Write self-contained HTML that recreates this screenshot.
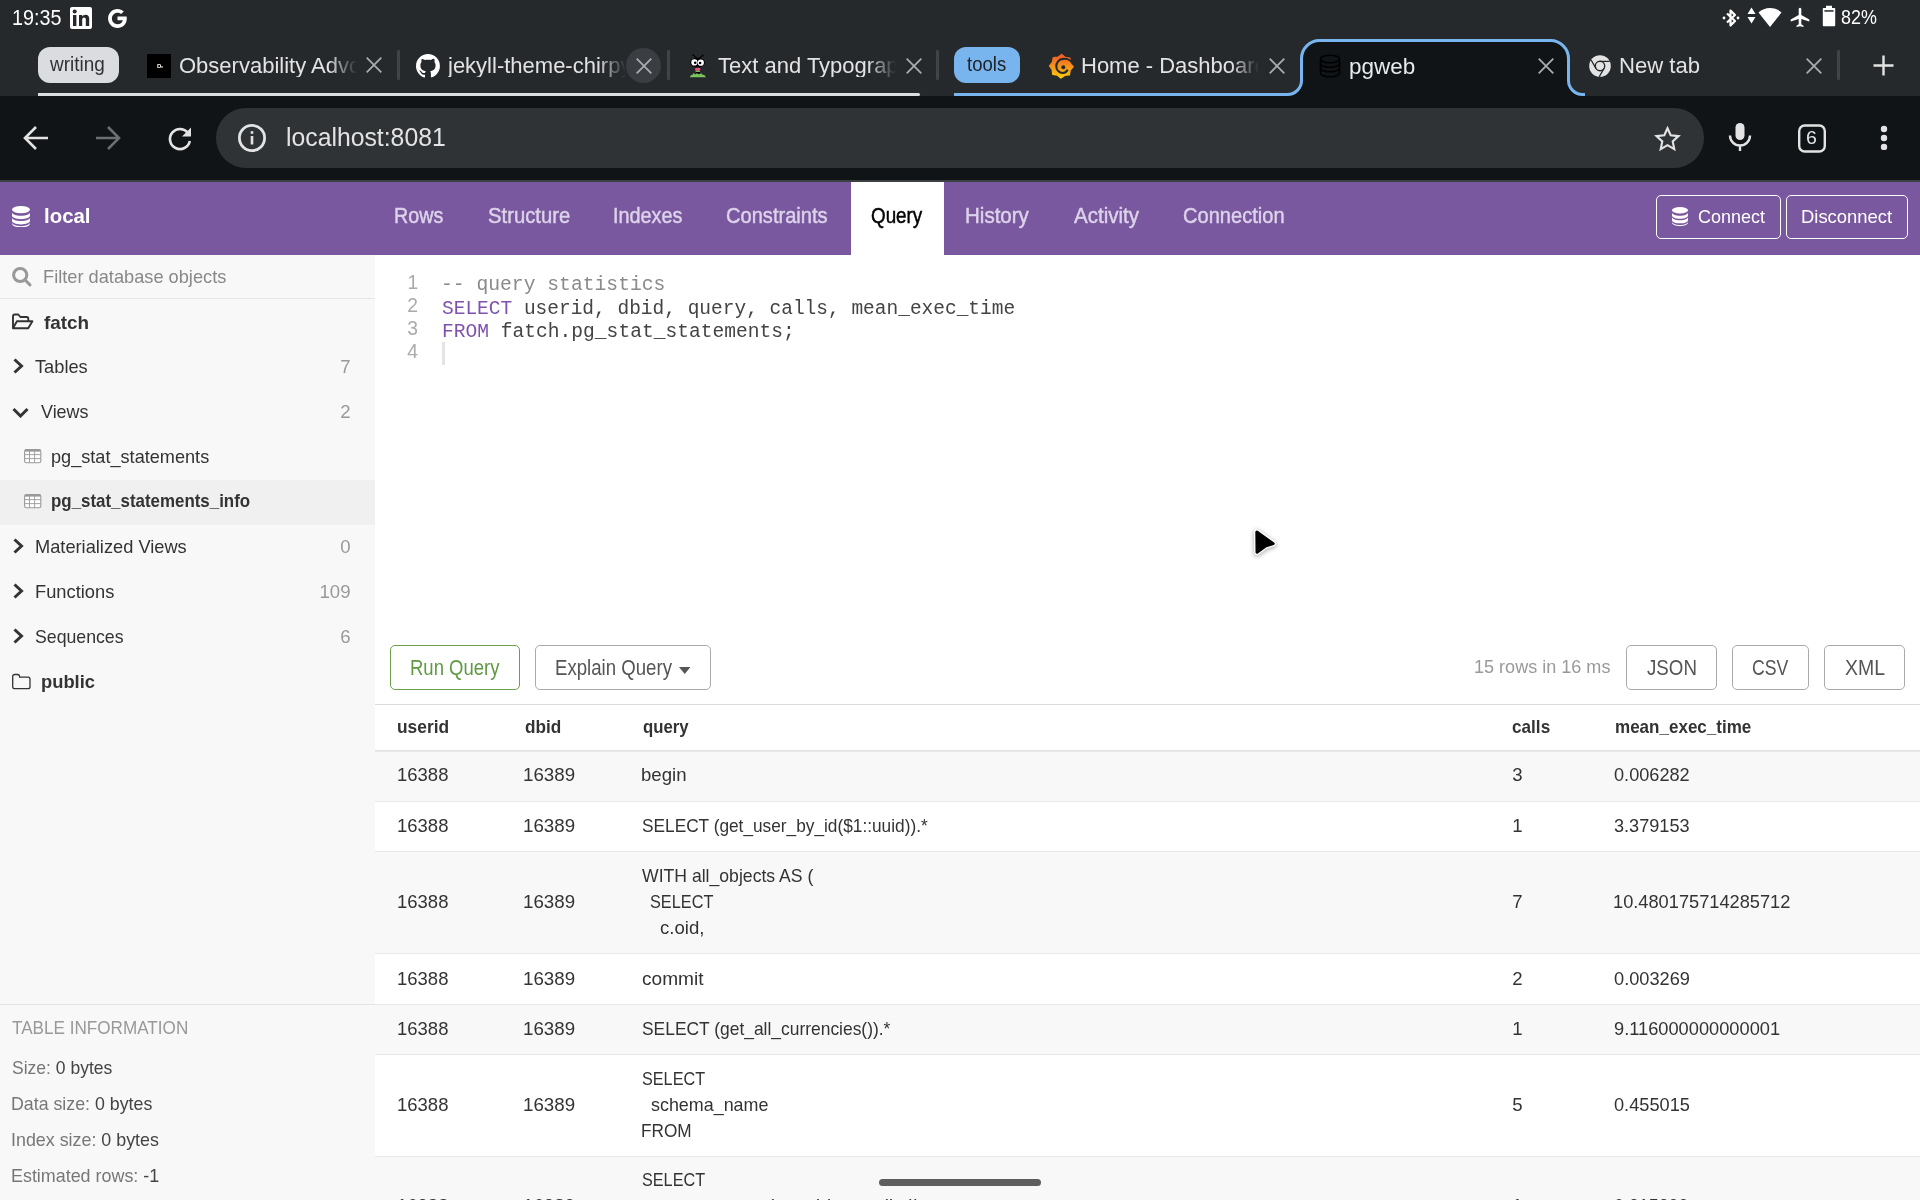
<!DOCTYPE html>
<html><head><meta charset="utf-8"><title>pgweb</title>
<style>
html,body{margin:0;padding:0;width:1920px;height:1200px;overflow:hidden;background:#fff;}
body{position:relative;font-family:"Liberation Sans",sans-serif;}
#root{position:absolute;left:0;top:0;width:1920px;height:1200px;overflow:hidden;will-change:transform;}
</style></head><body><div id="root">
<div style="position:absolute;left:0px;top:0px;width:1920px;height:96px;background:#25292c"></div>
<div style="position:absolute;left:0px;top:96px;width:1920px;height:84px;background:#101417"></div>
<div style="position:absolute;left:0px;top:180px;width:1920px;height:2px;background:#3c4043"></div>
<div style="position:absolute;left:11.82px;top:8.00px;font:normal 21.5px/21.5px 'Liberation Sans', sans-serif;color:#ffffff;white-space:pre;transform:scaleX(0.9185);transform-origin:0 0;">19:35</div>
<svg style="position:absolute;left:70px;top:7px;" width="22" height="22" viewBox="0 0 22 22"><rect x="0" y="0" width="22" height="22" rx="2" fill="#fff"/><rect x="3" y="8" width="3.4" height="11" fill="#25292c"/><circle cx="4.7" cy="4.6" r="2" fill="#25292c"/><path d="M9 8h3.2v1.6c.6-1.1 1.8-1.9 3.4-1.9 2.6 0 3.6 1.6 3.6 4.3V19h-3.4v-6.2c0-1.4-.5-2.2-1.7-2.2-1.3 0-1.9.9-1.9 2.3V19H9z" fill="#25292c"/></svg>
<svg style="position:absolute;left:107px;top:8px;" width="21" height="21" viewBox="0 0 21 21"><path d="M19.6 8.6H10.5v3.6h5.3c-.6 2.4-2.6 4-5.3 4-3.1 0-5.6-2.5-5.6-5.7s2.5-5.7 5.6-5.7c1.4 0 2.6.5 3.6 1.3l2.7-2.7C15.1 1.9 12.9 1 10.5 1 5.3 1 1.1 5.2 1.1 10.5S5.3 20 10.5 20c5 0 9.3-3.6 9.3-9.5 0-.6-.1-1.3-.2-1.9z" fill="#fff"/></svg>
<svg style="position:absolute;left:1722px;top:7px;" width="18" height="22" viewBox="0 0 18 22"><path d="M5 6.5l8 7.5-4.5 4.5V3.5L13 8l-8 7.5" fill="none" stroke="#fff" stroke-width="2.2" stroke-linejoin="round"/><circle cx="2" cy="11" r="1.4" fill="#fff"/><circle cx="16" cy="11" r="1.4" fill="#fff"/></svg>
<svg style="position:absolute;left:1747px;top:7px;" width="9" height="17" viewBox="0 0 9 17"><path d="M4.5 0.5L8.5 7H0.5z M4.5 16.5L8.5 10H0.5z" fill="#fff"/></svg>
<svg style="position:absolute;left:1758px;top:7px;" width="24" height="21" viewBox="0 0 24 21"><path d="M12 20L0.5 5.5C3.7 2.6 7.6 1 12 1s8.3 1.6 11.5 4.5z" fill="#fff"/></svg>
<svg style="position:absolute;left:1790px;top:7px;" width="20" height="21" viewBox="0 0 20 21"><path d="M10 0.8c.9 0 1.3.8 1.3 1.8v5.3l8 4.6v1.9l-8-2.4v5.2l2.2 1.6V20L10 19.2 6.5 20v-1.2l2.2-1.6v-5.2l-8 2.4v-1.9l8-4.6V2.6c0-1 .4-1.8 1.3-1.8z" fill="#fff"/></svg>
<svg style="position:absolute;left:1822px;top:5px;" width="14" height="22" viewBox="0 0 14 22"><path d="M4 0.8h6v2.2h2.2c.6 0 1 .4 1 1V20.3c0 .6-.4 1-1 1H1.8c-.6 0-1-.4-1-1V4c0-.6.4-1 1-1H4z" fill="#fff"/><rect x="2.4" y="5.2" width="9.2" height="1.5" fill="#25292c"/></svg>
<div style="position:absolute;left:1840.98px;top:7.00px;font:normal 20.6px/20.6px 'Liberation Sans', sans-serif;color:#ffffff;white-space:pre;transform:scaleX(0.8700);transform-origin:0 0;">82%</div>
<div style="position:absolute;left:38px;top:47px;width:81px;height:36px;background:#dadce0;border-radius:12px"></div>
<div style="position:absolute;left:50.09px;top:54.30px;font:normal 20.5px/20.5px 'Liberation Sans', sans-serif;color:#303134;white-space:pre;transform:scaleX(0.9249);transform-origin:0 0;">writing</div>
<div style="position:absolute;left:38px;top:93px;width:882px;height:3px;background:#dadce0;border-radius:0 2px 2px 0"></div>
<svg style="position:absolute;left:147px;top:54px;" width="24" height="24" viewBox="0 0 24 24"><rect width="24" height="24" fill="#000"/><text x="10" y="14.2" font-family="Liberation Sans" font-size="6" font-weight="bold" fill="#fff">D</text><text x="14" y="14.2" font-family="Liberation Sans" font-size="4" font-weight="bold" fill="#ddd">ιι</text></svg>
<div style="position:absolute;left:179px;top:55.00px;width:178px;overflow:hidden;font:22px/22px 'Liberation Sans', sans-serif;color:#e3e3e3;white-space:pre;-webkit-mask-image:linear-gradient(90deg,#000 calc(100% - 28px),transparent);">Observability Advocate</div>
<svg style="position:absolute;left:364.4px;top:55.400000000000006px;" width="20" height="20" viewBox="0 0 20 20"><path d="M2.7 2.7L17.3 17.3M17.3 2.7L2.7 17.3" stroke="#a9acb0" stroke-width="1.75" fill="none"/></svg>
<div style="position:absolute;left:397.2px;top:50.2px;width:2.6px;height:29.6px;background:#3f4448;border-radius:1.3px"></div>
<svg style="position:absolute;left:415px;top:53px;" width="26" height="26" viewBox="0 0 26 26"><path fill="#fff" d="M13 1C6.4 1 1 6.4 1 13c0 5.3 3.4 9.8 8.2 11.4.6.1.8-.3.8-.6v-2.1c-3.3.7-4-1.6-4-1.6-.5-1.4-1.3-1.8-1.3-1.8-1.1-.7.1-.7.1-.7 1.2.1 1.8 1.2 1.8 1.2 1.1 1.8 2.8 1.3 3.5 1 .1-.8.4-1.3.8-1.6-2.7-.3-5.5-1.3-5.5-5.9 0-1.3.5-2.4 1.2-3.2-.1-.3-.5-1.5.1-3.2 0 0 1-.3 3.3 1.2 1-.3 2-.4 3-.4s2 .1 3 .4c2.3-1.6 3.3-1.2 3.3-1.2.7 1.7.2 2.9.1 3.2.8.8 1.2 1.9 1.2 3.2 0 4.6-2.8 5.6-5.5 5.9.4.4.8 1.1.8 2.2v3.3c0 .3.2.7.8.6 4.8-1.6 8.2-6.1 8.2-11.4C25 6.4 19.6 1 13 1z"/></svg>
<div style="position:absolute;left:448px;top:55.00px;width:178px;overflow:hidden;font:22px/22px 'Liberation Sans', sans-serif;color:#e3e3e3;white-space:pre;-webkit-mask-image:linear-gradient(90deg,#000 calc(100% - 28px),transparent);">jekyll-theme-chirpy</div>
<div style="position:absolute;left:626px;top:48px;width:35px;height:35px;border-radius:50%;background:#3a3e42"></div>
<svg style="position:absolute;left:633.5px;top:55.5px;" width="20" height="20" viewBox="0 0 20 20"><path d="M2.7 2.7L17.3 17.3M17.3 2.7L2.7 17.3" stroke="#a9acb0" stroke-width="1.75" fill="none"/></svg>
<div style="position:absolute;left:667.2px;top:50.2px;width:2.6px;height:29.6px;background:#3f4448;border-radius:1.3px"></div>
<svg style="position:absolute;left:686px;top:52px;" width="24" height="28" viewBox="0 0 24 28"><path d="M7.3 3.2L11.2 6.6M16.7 3.4L12.9 6.6" stroke="#000" stroke-width="1.1"/><circle cx="7.3" cy="3.2" r="0.9" fill="#000"/><circle cx="16.7" cy="3.4" r="0.9" fill="#000"/><rect x="10" y="15" width="4" height="6.5" fill="#000"/><ellipse cx="11.6" cy="10.6" rx="7.3" ry="4.9" fill="#000"/><circle cx="8.4" cy="10.4" r="3.1" fill="#fff"/><circle cx="14.8" cy="10.7" r="3.1" fill="#fff"/><circle cx="9.2" cy="10.7" r="1.3" fill="#000"/><circle cx="14.1" cy="11" r="1.3" fill="#000"/><ellipse cx="11.7" cy="17.4" rx="2.8" ry="1.8" fill="#e8507f"/><rect x="9.5" y="19" width="4.5" height="1" fill="#5fbf4a"/><path d="M3.8 25.2Q4.6 22.6 6.8 22.6L7.6 21.1 9.1 22.4 11 21.2 12.6 22.5 15 21.3 16.2 22.5Q19 22.4 20 25.2Z" fill="#7cc35a"/></svg>
<div style="position:absolute;left:718px;top:55.00px;width:178px;overflow:hidden;font:22px/22px 'Liberation Sans', sans-serif;color:#e3e3e3;white-space:pre;-webkit-mask-image:linear-gradient(90deg,#000 calc(100% - 28px),transparent);">Text and Typography</div>
<svg style="position:absolute;left:903.5px;top:55.5px;" width="20" height="20" viewBox="0 0 20 20"><path d="M2.7 2.7L17.3 17.3M17.3 2.7L2.7 17.3" stroke="#a9acb0" stroke-width="1.75" fill="none"/></svg>
<div style="position:absolute;left:936.2px;top:50.2px;width:2.6px;height:29.6px;background:#3f4448;border-radius:1.3px"></div>
<div style="position:absolute;left:954px;top:47px;width:66px;height:36px;background:#78b5ef;border-radius:12px"></div>
<div style="position:absolute;left:966.52px;top:54.30px;font:normal 20.5px/20.5px 'Liberation Sans', sans-serif;color:#202124;white-space:pre;transform:scaleX(0.9046);transform-origin:0 0;">tools</div>
<svg style="position:absolute;left:1048px;top:52px;" width="26" height="28" viewBox="0 0 26 28"><defs><linearGradient id="gf" x1="0" y1="0" x2="0" y2="1"><stop offset="0" stop-color="#f05a28"/><stop offset="1" stop-color="#fbca0a"/></linearGradient></defs><polygon points="13.71,2.61 17.28,5.56 21.86,6.32 22.29,10.94 24.99,14.71 22.04,18.28 21.28,22.86 16.66,23.29 12.89,25.99 9.32,23.04 4.74,22.28 4.31,17.66 1.61,13.89 4.56,10.32 5.32,5.74 9.94,5.31" fill="url(#gf)" stroke="url(#gf)" stroke-width="1.5" stroke-linejoin="round"/><path d="M25 12.2 A9.3 9.3 0 0 0 15 6.9 A7.2 7.2 0 0 0 8.3 14.5 A6.5 6.5 0 0 0 14.8 21 A5.5 5.5 0 0 0 19.6 17.6" fill="none" stroke="#25292c" stroke-width="2.1"/><circle cx="15.3" cy="15.3" r="2" fill="#25292c"/></svg>
<div style="position:absolute;left:1081px;top:55.00px;width:178px;overflow:hidden;font:22px/22px 'Liberation Sans', sans-serif;color:#e3e3e3;white-space:pre;-webkit-mask-image:linear-gradient(90deg,#000 calc(100% - 28px),transparent);">Home - Dashboards</div>
<svg style="position:absolute;left:1266.5px;top:55.5px;" width="20" height="20" viewBox="0 0 20 20"><path d="M2.7 2.7L17.3 17.3M17.3 2.7L2.7 17.3" stroke="#a9acb0" stroke-width="1.75" fill="none"/></svg>
<div style="position:absolute;left:954px;top:93px;width:334px;height:3px;background:#78b5ef"></div>
<svg style="position:absolute;left:1270px;top:36px;" width="330" height="62" viewBox="0 0 330 62"><path d="M17.5 60 A15.5 15.5 0 0 0 31.5 44.5 V22.6 A18 18 0 0 1 49.5 4.6 H280.5 A18 18 0 0 1 298.5 22.6 V44.5 A15.5 15.5 0 0 0 312.5 60 z" fill="#101417"/><path d="M17.5 58.5 A14 14 0 0 0 31.5 44.5 V22.6 A18 18 0 0 1 49.5 4.6 H280.5 A18 18 0 0 1 298.5 22.6 V44.5 A14 14 0 0 0 312.5 58.5 H315" fill="none" stroke="#78b5ef" stroke-width="3"/></svg>
<svg style="position:absolute;left:1319px;top:54px;" width="22" height="24" viewBox="0 0 22 24"><g fill="none" stroke="#000" stroke-width="1.6"><ellipse cx="11" cy="5" rx="9.5" ry="3.8"/><path d="M1.5 5v14c0 2.1 4.3 3.8 9.5 3.8s9.5-1.7 9.5-3.8V5"/><path d="M1.5 9.5c0 2.1 4.3 3.8 9.5 3.8s9.5-1.7 9.5-3.8M1.5 14c0 2.1 4.3 3.8 9.5 3.8s9.5-1.7 9.5-3.8"/></g></svg>
<div style="position:absolute;left:1349.45px;top:55.70px;font:normal 22.5px/22.5px 'Liberation Sans', sans-serif;color:#e8eaed;white-space:pre;transform:scaleX(0.9982);transform-origin:0 0;">pgweb</div>
<svg style="position:absolute;left:1535.5px;top:55.5px;" width="20" height="20" viewBox="0 0 20 20"><path d="M2.7 2.7L17.3 17.3M17.3 2.7L2.7 17.3" stroke="#a9acb0" stroke-width="1.75" fill="none"/></svg>
<svg style="position:absolute;left:1589px;top:55px;" width="22" height="22" viewBox="0 0 22 22"><circle cx="11" cy="11" r="10.8" fill="#e3e3e3"/><circle cx="11" cy="11" r="4.7" fill="none" stroke="#25292c" stroke-width="1.4"/><path d="M11 6.3H20.7M15.07 13.35L10.2 21.75M6.93 13.35L2.1 4.95" stroke="#25292c" stroke-width="1.3"/></svg>
<div style="position:absolute;left:1618.73px;top:55.00px;font:normal 22.5px/22.5px 'Liberation Sans', sans-serif;color:#e3e3e3;white-space:pre;transform:scaleX(0.9810);transform-origin:0 0;">New tab</div>
<svg style="position:absolute;left:1804px;top:55.5px;" width="20" height="20" viewBox="0 0 20 20"><path d="M2.7 2.7L17.3 17.3M17.3 2.7L2.7 17.3" stroke="#a9acb0" stroke-width="1.75" fill="none"/></svg>
<div style="position:absolute;left:1837.2px;top:50.2px;width:2.6px;height:29.6px;background:#3f4448;border-radius:1.3px"></div>
<svg style="position:absolute;left:1873px;top:55px;" width="21" height="21" viewBox="0 0 21 21"><path d="M10.5 0.5V20.5M0.5 10.5H20.5" stroke="#e3e3e3" stroke-width="2.4"/></svg>
<svg style="position:absolute;left:22px;top:124px;" width="28" height="28" viewBox="0 0 28 28"><path d="M26 14H4M14 3L3 14l11 11" fill="none" stroke="#e3e3e3" stroke-width="2.6"/></svg>
<svg style="position:absolute;left:94px;top:124px;" width="28" height="28" viewBox="0 0 28 28"><path d="M2 14H24M14 3l11 11-11 11" fill="none" stroke="#6b6e72" stroke-width="2.6"/></svg>
<svg style="position:absolute;left:166px;top:124px;" width="28" height="28" viewBox="0 0 28 28"><path d="M22.3 9.5A10 10 0 1 0 23.8 17" fill="none" stroke="#e3e3e3" stroke-width="2.6"/><path d="M25 3.5V12.5H16z" fill="#e3e3e3"/></svg>
<div style="position:absolute;left:216px;top:108px;width:1488px;height:60px;background:#303336;border-radius:30px"></div>
<svg style="position:absolute;left:238px;top:124px;" width="28" height="28" viewBox="0 0 28 28"><circle cx="14" cy="14" r="12.6" fill="none" stroke="#e3e3e3" stroke-width="2.8"/><rect x="12.7" y="12" width="2.6" height="8.5" fill="#e3e3e3"/><rect x="12.7" y="7.2" width="2.6" height="2.6" fill="#e3e3e3"/></svg>
<div style="position:absolute;left:286.39px;top:125.00px;font:normal 25.5px/25.5px 'Liberation Sans', sans-serif;color:#e3e3e3;white-space:pre;transform:scaleX(0.9711);transform-origin:0 0;">localhost:8081</div>
<svg style="position:absolute;left:1653px;top:126px;" width="29" height="27" viewBox="0 0 29 27"><path d="M14.5 2.2l3.2 7.1 7.8.8-5.8 5.3 1.6 7.7-6.8-3.9-6.8 3.9 1.6-7.7-5.8-5.3 7.8-.8z" fill="none" stroke="#e3e3e3" stroke-width="2.1" stroke-linejoin="miter"/></svg>
<svg style="position:absolute;left:1727px;top:122px;" width="26" height="30" viewBox="0 0 26 30"><rect x="8.5" y="1" width="9" height="17" rx="4.5" fill="#e3e3e3"/><path d="M3 13.5a10 10 0 0 0 20 0M13 23.5V29" fill="none" stroke="#e3e3e3" stroke-width="2.4"/></svg>
<svg style="position:absolute;left:1797px;top:123px;" width="30" height="30" viewBox="0 0 30 30"><rect x="2.2" y="2.5" width="25.6" height="26" rx="5.5" fill="none" stroke="#e3e3e3" stroke-width="2.4"/></svg>
<div style="position:absolute;left:1806.42px;top:129.00px;font:normal 18.9px/18.9px 'Liberation Sans', sans-serif;color:#e3e3e3;white-space:pre;transform:scaleX(1.0354);transform-origin:0 0;">6</div>
<svg style="position:absolute;left:1877px;top:125px;" width="14" height="26" viewBox="0 0 14 26"><circle cx="7" cy="4" r="3.2" fill="#e3e3e3"/><circle cx="7" cy="13" r="3.2" fill="#e3e3e3"/><circle cx="7" cy="21.9" r="3.2" fill="#e3e3e3"/></svg>
<div style="position:absolute;left:0px;top:182px;width:1920px;height:73px;background:#79589f"></div>
<div style="position:absolute;left:0px;top:255px;width:375px;height:945px;background:#f8f8f8"></div>
<svg style="position:absolute;left:12px;top:206px;" width="18" height="21.4" viewBox="0 0 18 21.4"><g fill="#fff"><ellipse cx="9" cy="3.6" rx="9" ry="3.6"/><path d="M0 6.2c0 2 4 3.6 9 3.6s9-1.6 9-3.6v3.4c0 2-4 3.6-9 3.6s-9-1.6-9-3.6z"/><path d="M0 11.4c0 2 4 3.6 9 3.6s9-1.6 9-3.6v3.4c0 2-4 3.6-9 3.6s-9-1.6-9-3.6z"/><path d="M0 16.6c0 2 4 3.6 9 3.6s9-1.6 9-3.6v1.2c0 2-4 3.6-9 3.6s-9-1.6-9-3.6z"/></g></svg>
<div style="position:absolute;left:44.27px;top:206.00px;font:bold 20.7px/20.7px 'Liberation Sans', sans-serif;color:#fff;white-space:pre;transform:scaleX(0.9865);transform-origin:0 0;">local</div>
<div style="position:absolute;left:851px;top:182px;width:93px;height:73px;background:#fff"></div>
<div style="position:absolute;left:394.42px;top:206.00px;font:normal 21.4px/21.4px 'Liberation Sans', sans-serif;color:#ddd3ea;white-space:pre;transform:scaleX(0.9209);transform-origin:0 0;-webkit-text-stroke:0.45px #ddd3ea">Rows</div>
<div style="position:absolute;left:488.09px;top:206.00px;font:normal 21.4px/21.4px 'Liberation Sans', sans-serif;color:#ddd3ea;white-space:pre;transform:scaleX(0.9475);transform-origin:0 0;-webkit-text-stroke:0.45px #ddd3ea">Structure</div>
<div style="position:absolute;left:613.22px;top:206.00px;font:normal 21.4px/21.4px 'Liberation Sans', sans-serif;color:#ddd3ea;white-space:pre;transform:scaleX(0.9263);transform-origin:0 0;-webkit-text-stroke:0.45px #ddd3ea">Indexes</div>
<div style="position:absolute;left:726.49px;top:206.00px;font:normal 21.4px/21.4px 'Liberation Sans', sans-serif;color:#ddd3ea;white-space:pre;transform:scaleX(0.9393);transform-origin:0 0;-webkit-text-stroke:0.45px #ddd3ea">Constraints</div>
<div style="position:absolute;left:871.15px;top:206.00px;font:normal 21.4px/21.4px 'Liberation Sans', sans-serif;color:#000;white-space:pre;transform:scaleX(0.8805);transform-origin:0 0;-webkit-text-stroke:0.45px #000">Query</div>
<div style="position:absolute;left:964.86px;top:206.00px;font:normal 21.4px/21.4px 'Liberation Sans', sans-serif;color:#ddd3ea;white-space:pre;transform:scaleX(0.9600);transform-origin:0 0;-webkit-text-stroke:0.45px #ddd3ea">History</div>
<div style="position:absolute;left:1074.00px;top:206.00px;font:normal 21.4px/21.4px 'Liberation Sans', sans-serif;color:#ddd3ea;white-space:pre;transform:scaleX(0.9597);transform-origin:0 0;-webkit-text-stroke:0.45px #ddd3ea">Activity</div>
<div style="position:absolute;left:1183.00px;top:206.00px;font:normal 21.4px/21.4px 'Liberation Sans', sans-serif;color:#ddd3ea;white-space:pre;transform:scaleX(0.9384);transform-origin:0 0;-webkit-text-stroke:0.45px #ddd3ea">Connection</div>
<div style="position:absolute;left:1656px;top:195px;width:125px;height:44px;border:1.5px solid #fff;border-radius:5px;box-sizing:border-box"></div>
<div style="position:absolute;left:1786px;top:195px;width:122px;height:44px;border:1.5px solid #fff;border-radius:5px;box-sizing:border-box"></div>
<svg style="position:absolute;left:1672px;top:207px;" width="16" height="19" viewBox="0 0 18 21.4"><g fill="#fff"><ellipse cx="9" cy="3.6" rx="9" ry="3.6"/><path d="M0 6.2c0 2 4 3.6 9 3.6s9-1.6 9-3.6v3.4c0 2-4 3.6-9 3.6s-9-1.6-9-3.6z"/><path d="M0 11.4c0 2 4 3.6 9 3.6s9-1.6 9-3.6v3.4c0 2-4 3.6-9 3.6s-9-1.6-9-3.6z"/><path d="M0 16.6c0 2 4 3.6 9 3.6s9-1.6 9-3.6v1.2c0 2-4 3.6-9 3.6s-9-1.6-9-3.6z"/></g></svg>
<div style="position:absolute;left:1697.90px;top:207.20px;font:normal 19px/19px 'Liberation Sans', sans-serif;color:#fff;white-space:pre;transform:scaleX(0.9451);transform-origin:0 0;">Connect</div>
<div style="position:absolute;left:1800.53px;top:207.20px;font:normal 19px/19px 'Liberation Sans', sans-serif;color:#fff;white-space:pre;transform:scaleX(0.9693);transform-origin:0 0;">Disconnect</div>
<svg style="position:absolute;left:10px;top:265px;" width="24" height="24" viewBox="0 0 24 24"><circle cx="10.2" cy="10" r="6.6" fill="none" stroke="#999" stroke-width="3"/><path d="M15.3 15.2L20 19.9" stroke="#999" stroke-width="3" stroke-linecap="round"/></svg>
<div style="position:absolute;left:42.94px;top:267.10px;font:normal 19px/19px 'Liberation Sans', sans-serif;color:#888;white-space:pre;transform:scaleX(0.9590);transform-origin:0 0;">Filter database objects</div>
<div style="position:absolute;left:0px;top:298px;width:375px;height:1px;background:#e6e6e6"></div>
<svg style="position:absolute;left:10px;top:312px;" width="24" height="18" viewBox="0 0 24 18"><g fill="none" stroke="#333" stroke-width="1.9" stroke-linejoin="round"><path d="M3 16V4.2Q3 2.5 4.7 2.5H8.3L10.4 5H16.6Q18.3 5 18.3 6.7V9"/><path d="M3 16.2L6.9 9.2H22.4L18.2 16.2Z"/></g></svg>
<div style="position:absolute;left:44.22px;top:314.20px;font:bold 18.6px/18.6px 'Liberation Sans', sans-serif;color:#333333;white-space:pre;transform:scaleX(1.0149);transform-origin:0 0;">fatch</div>
<svg style="position:absolute;left:12px;top:358px;" width="12" height="16" viewBox="0 0 12 16"><path d="M2.5 1.5L9.5 8l-7 6.5" fill="none" stroke="#333" stroke-width="3"/></svg>
<div style="position:absolute;left:35.04px;top:358.00px;font:normal 18.6px/18.6px 'Liberation Sans', sans-serif;color:#333333;white-space:pre;transform:scaleX(0.9804);transform-origin:0 0;">Tables</div>
<div style="position:absolute;left:270.5px;width:80px;text-align:right;top:358.00px;font:18.6px/18.6px 'Liberation Sans', sans-serif;color:#999;white-space:pre">7</div>
<svg style="position:absolute;left:12px;top:407px;" width="17" height="11" viewBox="0 0 17 11"><path d="M1.5 2l7 7 7-7" fill="none" stroke="#333" stroke-width="3"/></svg>
<div style="position:absolute;left:41.00px;top:402.80px;font:normal 18.6px/18.6px 'Liberation Sans', sans-serif;color:#333333;white-space:pre;transform:scaleX(0.9642);transform-origin:0 0;">Views</div>
<div style="position:absolute;left:270.5px;width:80px;text-align:right;top:403.00px;font:18.6px/18.6px 'Liberation Sans', sans-serif;color:#999;white-space:pre">2</div>
<svg style="position:absolute;left:24px;top:449px;" width="18" height="15" viewBox="0 0 18 15"><rect x="0.6" y="0.6" width="16.2" height="13.2" rx="1.8" fill="#fdfdfd" stroke="#999" stroke-width="1.1"/><path d="M1 1.6H16.4" stroke="#999" stroke-width="2"/><path d="M5.5 1v12.6M10.6 1v12.6M1 5.6h15.6M1 9.6h15.6" stroke="#999" stroke-width="0.9"/></svg>
<div style="position:absolute;left:50.66px;top:447.60px;font:normal 18.6px/18.6px 'Liberation Sans', sans-serif;color:#333333;white-space:pre;transform:scaleX(0.9750);transform-origin:0 0;">pg_stat_statements</div>
<div style="position:absolute;left:0px;top:480px;width:375px;height:45px;background:#f0f0f0"></div>
<svg style="position:absolute;left:24px;top:494px;" width="18" height="15" viewBox="0 0 18 15"><rect x="0.6" y="0.6" width="16.2" height="13.2" rx="1.8" fill="#fdfdfd" stroke="#999" stroke-width="1.1"/><path d="M1 1.6H16.4" stroke="#999" stroke-width="2"/><path d="M5.5 1v12.6M10.6 1v12.6M1 5.6h15.6M1 9.6h15.6" stroke="#999" stroke-width="0.9"/></svg>
<div style="position:absolute;left:50.65px;top:492.30px;font:bold 18.6px/18.6px 'Liberation Sans', sans-serif;color:#333333;white-space:pre;transform:scaleX(0.9091);transform-origin:0 0;">pg_stat_statements_info</div>
<svg style="position:absolute;left:12px;top:537.7px;" width="12" height="16" viewBox="0 0 12 16"><path d="M2.5 1.5L9.5 8l-7 6.5" fill="none" stroke="#333" stroke-width="3"/></svg>
<div style="position:absolute;left:34.64px;top:537.70px;font:normal 18.6px/18.6px 'Liberation Sans', sans-serif;color:#333333;white-space:pre;transform:scaleX(0.9809);transform-origin:0 0;">Materialized Views</div>
<div style="position:absolute;left:270.5px;width:80px;text-align:right;top:537.70px;font:18.6px/18.6px 'Liberation Sans', sans-serif;color:#999;white-space:pre">0</div>
<svg style="position:absolute;left:12px;top:582.7px;" width="12" height="16" viewBox="0 0 12 16"><path d="M2.5 1.5L9.5 8l-7 6.5" fill="none" stroke="#333" stroke-width="3"/></svg>
<div style="position:absolute;left:34.64px;top:582.70px;font:normal 18.6px/18.6px 'Liberation Sans', sans-serif;color:#333333;white-space:pre;transform:scaleX(0.9835);transform-origin:0 0;">Functions</div>
<div style="position:absolute;left:270.5px;width:80px;text-align:right;top:582.70px;font:18.6px/18.6px 'Liberation Sans', sans-serif;color:#999;white-space:pre">109</div>
<svg style="position:absolute;left:12px;top:627.6px;" width="12" height="16" viewBox="0 0 12 16"><path d="M2.5 1.5L9.5 8l-7 6.5" fill="none" stroke="#333" stroke-width="3"/></svg>
<div style="position:absolute;left:34.90px;top:627.60px;font:normal 18.6px/18.6px 'Liberation Sans', sans-serif;color:#333333;white-space:pre;transform:scaleX(0.9519);transform-origin:0 0;">Sequences</div>
<div style="position:absolute;left:270.5px;width:80px;text-align:right;top:627.60px;font:18.6px/18.6px 'Liberation Sans', sans-serif;color:#999;white-space:pre">6</div>
<svg style="position:absolute;left:10px;top:672px;" width="22" height="18" viewBox="0 0 22 18"><path d="M2.7 4.5Q2.7 2.5 4.7 2.5H7.6Q9.3 2.5 9.5 4.2L9.6 5.2H18Q20 5.2 20 7.2V14.7Q20 16.7 18 16.7H4.7Q2.7 16.7 2.7 14.7Z" fill="none" stroke="#333" stroke-width="1.3" stroke-linejoin="round"/></svg>
<div style="position:absolute;left:40.61px;top:673.00px;font:bold 18.6px/18.6px 'Liberation Sans', sans-serif;color:#333333;white-space:pre;transform:scaleX(0.9868);transform-origin:0 0;">public</div>
<div style="position:absolute;left:0px;top:1004px;width:375px;height:1px;background:#e4e4e4"></div>
<div style="position:absolute;left:11.96px;top:1017.80px;font:normal 19.2px/19.2px 'Liberation Sans', sans-serif;color:#999;white-space:pre;transform:scaleX(0.8921);transform-origin:0 0;">TABLE INFORMATION</div>
<div style="position:absolute;left:11.51px;top:1059.00px;font:normal 18.6px/18.6px 'Liberation Sans', sans-serif;color:#444;white-space:pre;transform:scaleX(0.9419);transform-origin:0 0;"><span style="color:#777">Size: </span>0 bytes</div>
<div style="position:absolute;left:10.88px;top:1094.60px;font:normal 18.6px/18.6px 'Liberation Sans', sans-serif;color:#444;white-space:pre;transform:scaleX(0.9559);transform-origin:0 0;"><span style="color:#777">Data size: </span>0 bytes</div>
<div style="position:absolute;left:10.69px;top:1130.80px;font:normal 18.6px/18.6px 'Liberation Sans', sans-serif;color:#444;white-space:pre;transform:scaleX(0.9606);transform-origin:0 0;"><span style="color:#777">Index size: </span>0 bytes</div>
<div style="position:absolute;left:10.87px;top:1166.90px;font:normal 18.6px/18.6px 'Liberation Sans', sans-serif;color:#444;white-space:pre;transform:scaleX(0.9625);transform-origin:0 0;"><span style="color:#777">Estimated rows: </span>-1</div>
<div style="position:absolute;left:407.50px;top:273.20px;font:normal 19.3px/19.3px 'Liberation Sans', sans-serif;color:#aaaaaa;white-space:pre;">1</div>
<div style="position:absolute;left:407.30px;top:296.10px;font:normal 19.3px/19.3px 'Liberation Sans', sans-serif;color:#aaaaaa;white-space:pre;">2</div>
<div style="position:absolute;left:407.30px;top:319.00px;font:normal 19.3px/19.3px 'Liberation Sans', sans-serif;color:#aaaaaa;white-space:pre;">3</div>
<div style="position:absolute;left:407.30px;top:341.90px;font:normal 19.3px/19.3px 'Liberation Sans', sans-serif;color:#aaaaaa;white-space:pre;">4</div>
<div style="position:absolute;left:440.55px;top:275.00px;font:normal 20px/20px 'Liberation Mono', monospace;color:#8a8a8a;white-space:pre;transform:scaleX(0.9839);transform-origin:0 0;">-- query statistics</div>
<div style="position:absolute;left:442.32px;top:298.70px;font:normal 20px/20px 'Liberation Mono', monospace;color:#444;white-space:pre;transform:scaleX(0.9746);transform-origin:0 0;"><span style="color:#7f52ad">SELECT</span> userid, dbid, query, calls, mean_exec_time</div>
<div style="position:absolute;left:441.54px;top:321.70px;font:normal 20px/20px 'Liberation Mono', monospace;color:#444;white-space:pre;transform:scaleX(0.9797);transform-origin:0 0;"><span style="color:#7f52ad">FROM</span> fatch.pg_stat_statements;</div>
<div style="position:absolute;left:442.2px;top:342px;width:2.5px;height:22.6px;background:#e4e4e4"></div>
<div style="position:absolute;left:390px;top:645px;width:130px;height:45px;border:1.5px solid #6a9f4f;border-radius:5px;box-sizing:border-box"></div>
<div style="position:absolute;left:409.72px;top:657.40px;font:normal 21.7px/21.7px 'Liberation Sans', sans-serif;color:#5f9a42;white-space:pre;transform:scaleX(0.8538);transform-origin:0 0;">Run Query</div>
<div style="position:absolute;left:535px;top:645px;width:176px;height:45px;border:1.5px solid #aaa;border-radius:5px;box-sizing:border-box"></div>
<div style="position:absolute;left:555.01px;top:657.40px;font:normal 21.7px/21.7px 'Liberation Sans', sans-serif;color:#555;white-space:pre;transform:scaleX(0.8585);transform-origin:0 0;">Explain Query</div>
<svg style="position:absolute;left:678.5px;top:666.5px;" width="11.5" height="7" viewBox="0 0 11.5 7"><path d="M0 0h11.5L5.75 7z" fill="#555"/></svg>
<div style="position:absolute;left:1474.04px;top:657.90px;font:normal 18.8px/18.8px 'Liberation Sans', sans-serif;color:#999;white-space:pre;transform:scaleX(0.9610);transform-origin:0 0;">15 rows in 16 ms</div>
<div style="position:absolute;left:1626px;top:645px;width:91px;height:45px;border:1.5px solid #aaa;border-radius:5px;box-sizing:border-box"></div>
<div style="position:absolute;left:1646.52px;top:656.80px;font:normal 21.7px/21.7px 'Liberation Sans', sans-serif;color:#555;white-space:pre;transform:scaleX(0.8626);transform-origin:0 0;">JSON</div>
<div style="position:absolute;left:1732px;top:645px;width:77px;height:45px;border:1.5px solid #aaa;border-radius:5px;box-sizing:border-box"></div>
<div style="position:absolute;left:1751.61px;top:656.80px;font:normal 21.7px/21.7px 'Liberation Sans', sans-serif;color:#555;white-space:pre;transform:scaleX(0.8159);transform-origin:0 0;">CSV</div>
<div style="position:absolute;left:1824px;top:645px;width:81px;height:45px;border:1.5px solid #aaa;border-radius:5px;box-sizing:border-box"></div>
<div style="position:absolute;left:1844.61px;top:656.80px;font:normal 21.7px/21.7px 'Liberation Sans', sans-serif;color:#555;white-space:pre;transform:scaleX(0.8964);transform-origin:0 0;">XML</div>
<div style="position:absolute;left:375px;top:704px;width:1545px;height:1.2px;background:#dcdcdc"></div>
<div style="position:absolute;left:396.86px;top:717.60px;font:bold 18.6px/18.6px 'Liberation Sans', sans-serif;color:#333333;white-space:pre;transform:scaleX(0.9331);transform-origin:0 0;">userid</div>
<div style="position:absolute;left:525.11px;top:717.60px;font:bold 18.6px/18.6px 'Liberation Sans', sans-serif;color:#333333;white-space:pre;transform:scaleX(0.9251);transform-origin:0 0;">dbid</div>
<div style="position:absolute;left:643.33px;top:717.60px;font:bold 18.6px/18.6px 'Liberation Sans', sans-serif;color:#333333;white-space:pre;transform:scaleX(0.9027);transform-origin:0 0;">query</div>
<div style="position:absolute;left:1512.40px;top:717.60px;font:bold 18.6px/18.6px 'Liberation Sans', sans-serif;color:#333333;white-space:pre;transform:scaleX(0.9231);transform-origin:0 0;">calls</div>
<div style="position:absolute;left:1614.64px;top:717.60px;font:bold 18.6px/18.6px 'Liberation Sans', sans-serif;color:#333333;white-space:pre;transform:scaleX(0.9159);transform-origin:0 0;">mean_exec_time</div>
<div style="position:absolute;left:375px;top:750px;width:1545px;height:1.5px;background:#e3e3e3"></div>
<div style="position:absolute;left:375px;top:750.5px;width:1545px;height:50.5px;background:#f8f8f8;border-top:1px solid #e8e8e8;box-sizing:border-box"></div>
<div style="position:absolute;left:397.11px;top:766.00px;font:normal 18.6px/18.6px 'Liberation Sans', sans-serif;color:#333333;white-space:pre;transform:scaleX(0.9946);transform-origin:0 0;">16388</div>
<div style="position:absolute;left:522.80px;top:766.00px;font:normal 18.6px/18.6px 'Liberation Sans', sans-serif;color:#333333;white-space:pre;transform:scaleX(1.0065);transform-origin:0 0;">16389</div>
<div style="position:absolute;left:1512.20px;top:766.00px;font:normal 18.6px/18.6px 'Liberation Sans', sans-serif;color:#333333;white-space:pre;">3</div>
<div style="position:absolute;left:1614.17px;top:766.00px;font:normal 18.6px/18.6px 'Liberation Sans', sans-serif;color:#333333;white-space:pre;transform:scaleX(0.9754);transform-origin:0 0;">0.006282</div>
<div style="position:absolute;left:641.18px;top:766.00px;font:normal 18.6px/18.6px 'Liberation Sans', sans-serif;color:#333333;white-space:pre;transform:scaleX(1.0013);transform-origin:0 0;">begin</div>
<div style="position:absolute;left:375px;top:801px;width:1545px;height:50px;background:#ffffff;border-top:1px solid #e8e8e8;box-sizing:border-box"></div>
<div style="position:absolute;left:397.11px;top:817.00px;font:normal 18.6px/18.6px 'Liberation Sans', sans-serif;color:#333333;white-space:pre;transform:scaleX(0.9946);transform-origin:0 0;">16388</div>
<div style="position:absolute;left:522.80px;top:817.00px;font:normal 18.6px/18.6px 'Liberation Sans', sans-serif;color:#333333;white-space:pre;transform:scaleX(1.0065);transform-origin:0 0;">16389</div>
<div style="position:absolute;left:1512.20px;top:817.00px;font:normal 18.6px/18.6px 'Liberation Sans', sans-serif;color:#333333;white-space:pre;">1</div>
<div style="position:absolute;left:1614.17px;top:817.00px;font:normal 18.6px/18.6px 'Liberation Sans', sans-serif;color:#333333;white-space:pre;transform:scaleX(0.9742);transform-origin:0 0;">3.379153</div>
<div style="position:absolute;left:641.52px;top:817.00px;font:normal 18.6px/18.6px 'Liberation Sans', sans-serif;color:#333333;white-space:pre;transform:scaleX(0.9285);transform-origin:0 0;">SELECT (get_user_by_id($1::uuid)).*</div>
<div style="position:absolute;left:375px;top:851px;width:1545px;height:102.29999999999995px;background:#f8f8f8;border-top:1px solid #e8e8e8;box-sizing:border-box"></div>
<div style="position:absolute;left:397.11px;top:893.00px;font:normal 18.6px/18.6px 'Liberation Sans', sans-serif;color:#333333;white-space:pre;transform:scaleX(0.9946);transform-origin:0 0;">16388</div>
<div style="position:absolute;left:522.80px;top:893.00px;font:normal 18.6px/18.6px 'Liberation Sans', sans-serif;color:#333333;white-space:pre;transform:scaleX(1.0065);transform-origin:0 0;">16389</div>
<div style="position:absolute;left:1512.20px;top:893.00px;font:normal 18.6px/18.6px 'Liberation Sans', sans-serif;color:#333333;white-space:pre;">7</div>
<div style="position:absolute;left:1613.43px;top:893.00px;font:normal 18.6px/18.6px 'Liberation Sans', sans-serif;color:#333333;white-space:pre;transform:scaleX(0.9802);transform-origin:0 0;">10.480175714285712</div>
<div style="position:absolute;left:642.30px;top:867.00px;font:normal 18.6px/18.6px 'Liberation Sans', sans-serif;color:#333333;white-space:pre;transform:scaleX(0.9475);transform-origin:0 0;">WITH all_objects AS (</div>
<div style="position:absolute;left:650.47px;top:893.00px;font:normal 18.6px/18.6px 'Liberation Sans', sans-serif;color:#333333;white-space:pre;transform:scaleX(0.8757);transform-origin:0 0;">SELECT</div>
<div style="position:absolute;left:659.66px;top:919.00px;font:normal 18.6px/18.6px 'Liberation Sans', sans-serif;color:#333333;white-space:pre;transform:scaleX(0.9991);transform-origin:0 0;">c.oid,</div>
<div style="position:absolute;left:375px;top:953.3px;width:1545px;height:51.0px;background:#ffffff;border-top:1px solid #e8e8e8;box-sizing:border-box"></div>
<div style="position:absolute;left:397.11px;top:969.50px;font:normal 18.6px/18.6px 'Liberation Sans', sans-serif;color:#333333;white-space:pre;transform:scaleX(0.9946);transform-origin:0 0;">16388</div>
<div style="position:absolute;left:522.80px;top:969.50px;font:normal 18.6px/18.6px 'Liberation Sans', sans-serif;color:#333333;white-space:pre;transform:scaleX(1.0065);transform-origin:0 0;">16389</div>
<div style="position:absolute;left:1512.20px;top:969.50px;font:normal 18.6px/18.6px 'Liberation Sans', sans-serif;color:#333333;white-space:pre;">2</div>
<div style="position:absolute;left:1614.16px;top:969.50px;font:normal 18.6px/18.6px 'Liberation Sans', sans-serif;color:#333333;white-space:pre;transform:scaleX(0.9793);transform-origin:0 0;">0.003269</div>
<div style="position:absolute;left:641.54px;top:969.50px;font:normal 18.6px/18.6px 'Liberation Sans', sans-serif;color:#333333;white-space:pre;transform:scaleX(1.0262);transform-origin:0 0;">commit</div>
<div style="position:absolute;left:375px;top:1004.3px;width:1545px;height:50.100000000000136px;background:#f8f8f8;border-top:1px solid #e8e8e8;box-sizing:border-box"></div>
<div style="position:absolute;left:397.11px;top:1020.00px;font:normal 18.6px/18.6px 'Liberation Sans', sans-serif;color:#333333;white-space:pre;transform:scaleX(0.9946);transform-origin:0 0;">16388</div>
<div style="position:absolute;left:522.80px;top:1020.00px;font:normal 18.6px/18.6px 'Liberation Sans', sans-serif;color:#333333;white-space:pre;transform:scaleX(1.0065);transform-origin:0 0;">16389</div>
<div style="position:absolute;left:1512.20px;top:1020.00px;font:normal 18.6px/18.6px 'Liberation Sans', sans-serif;color:#333333;white-space:pre;">1</div>
<div style="position:absolute;left:1613.98px;top:1020.00px;font:normal 18.6px/18.6px 'Liberation Sans', sans-serif;color:#333333;white-space:pre;transform:scaleX(0.9816);transform-origin:0 0;">9.116000000000001</div>
<div style="position:absolute;left:641.82px;top:1020.00px;font:normal 18.6px/18.6px 'Liberation Sans', sans-serif;color:#333333;white-space:pre;transform:scaleX(0.9364);transform-origin:0 0;">SELECT (get_all_currencies()).*</div>
<div style="position:absolute;left:375px;top:1054.4px;width:1545px;height:101.59999999999991px;background:#ffffff;border-top:1px solid #e8e8e8;box-sizing:border-box"></div>
<div style="position:absolute;left:397.11px;top:1096.00px;font:normal 18.6px/18.6px 'Liberation Sans', sans-serif;color:#333333;white-space:pre;transform:scaleX(0.9946);transform-origin:0 0;">16388</div>
<div style="position:absolute;left:522.80px;top:1096.00px;font:normal 18.6px/18.6px 'Liberation Sans', sans-serif;color:#333333;white-space:pre;transform:scaleX(1.0065);transform-origin:0 0;">16389</div>
<div style="position:absolute;left:1512.20px;top:1096.00px;font:normal 18.6px/18.6px 'Liberation Sans', sans-serif;color:#333333;white-space:pre;">5</div>
<div style="position:absolute;left:1614.16px;top:1096.00px;font:normal 18.6px/18.6px 'Liberation Sans', sans-serif;color:#333333;white-space:pre;transform:scaleX(0.9781);transform-origin:0 0;">0.455015</div>
<div style="position:absolute;left:641.87px;top:1070.00px;font:normal 18.6px/18.6px 'Liberation Sans', sans-serif;color:#333333;white-space:pre;transform:scaleX(0.8715);transform-origin:0 0;">SELECT</div>
<div style="position:absolute;left:650.95px;top:1096.00px;font:normal 18.6px/18.6px 'Liberation Sans', sans-serif;color:#333333;white-space:pre;transform:scaleX(0.9627);transform-origin:0 0;">schema_name</div>
<div style="position:absolute;left:641.22px;top:1122.00px;font:normal 18.6px/18.6px 'Liberation Sans', sans-serif;color:#333333;white-space:pre;transform:scaleX(0.9247);transform-origin:0 0;">FROM</div>
<div style="position:absolute;left:375px;top:1156px;width:1545px;height:100.40000000000009px;background:#f8f8f8;border-top:1px solid #e8e8e8;box-sizing:border-box"></div>
<div style="position:absolute;left:397.11px;top:1197.00px;font:normal 18.6px/18.6px 'Liberation Sans', sans-serif;color:#333333;white-space:pre;transform:scaleX(0.9946);transform-origin:0 0;">16388</div>
<div style="position:absolute;left:522.80px;top:1197.00px;font:normal 18.6px/18.6px 'Liberation Sans', sans-serif;color:#333333;white-space:pre;transform:scaleX(1.0065);transform-origin:0 0;">16389</div>
<div style="position:absolute;left:1512.20px;top:1197.00px;font:normal 18.6px/18.6px 'Liberation Sans', sans-serif;color:#333333;white-space:pre;">1</div>
<div style="position:absolute;left:1614.17px;top:1197.00px;font:normal 18.6px/18.6px 'Liberation Sans', sans-serif;color:#333333;white-space:pre;transform:scaleX(0.9622);transform-origin:0 0;">0.315299</div>
<div style="position:absolute;left:641.87px;top:1171.00px;font:normal 18.6px/18.6px 'Liberation Sans', sans-serif;color:#333333;white-space:pre;transform:scaleX(0.8715);transform-origin:0 0;">SELECT</div>
<div style="position:absolute;left:768.00px;top:1197.00px;font:normal 18.6px/18.6px 'Liberation Sans', sans-serif;color:#333333;white-space:pre;">(</div>
<div style="position:absolute;left:816.00px;top:1197.00px;font:normal 18.6px/18.6px 'Liberation Sans', sans-serif;color:#333333;white-space:pre;">l</div>
<div style="position:absolute;left:827.00px;top:1197.00px;font:normal 18.6px/18.6px 'Liberation Sans', sans-serif;color:#333333;white-space:pre;">l</div>
<div style="position:absolute;left:882.00px;top:1197.00px;font:normal 18.6px/18.6px 'Liberation Sans', sans-serif;color:#333333;white-space:pre;">(</div>
<div style="position:absolute;left:889.00px;top:1197.00px;font:normal 18.6px/18.6px 'Liberation Sans', sans-serif;color:#333333;white-space:pre;">l</div>
<div style="position:absolute;left:909.00px;top:1197.00px;font:normal 18.6px/18.6px 'Liberation Sans', sans-serif;color:#333333;white-space:pre;">)</div>
<div style="position:absolute;left:914.00px;top:1197.00px;font:normal 18.6px/18.6px 'Liberation Sans', sans-serif;color:#333333;white-space:pre;">)</div>
<div style="position:absolute;left:956.00px;top:1197.00px;font:normal 18.6px/18.6px 'Liberation Sans', sans-serif;color:#333333;white-space:pre;">t</div>
<div style="position:absolute;left:879px;top:1179px;width:162px;height:6.5px;background:#5e5e5e;border-radius:4px"></div>
<svg style="position:absolute;left:1240px;top:515px;" width="50" height="50" viewBox="0 0 50 50"><defs><filter id="sh" x="-50%" y="-50%" width="200%" height="200%"><feGaussianBlur stdDeviation="2.2"/></filter></defs><path d="M16.8 17 L33.2 28.6 L25.5 31 L17 37.2 Z" fill="#000" stroke="#000" stroke-width="7" stroke-linejoin="round" opacity="0.28" filter="url(#sh)" transform="translate(0,1.2)"/><path d="M16.8 17 L33.2 28.6 L25.5 31 L17 37.2 Z" fill="#fff" stroke="#fff" stroke-width="5.6" stroke-linejoin="round"/><path d="M16.8 17 L33.2 28.6 L25.5 31 L17 37.2 Z" fill="#000" stroke="#000" stroke-width="3" stroke-linejoin="round"/></svg>
</div></body></html>
